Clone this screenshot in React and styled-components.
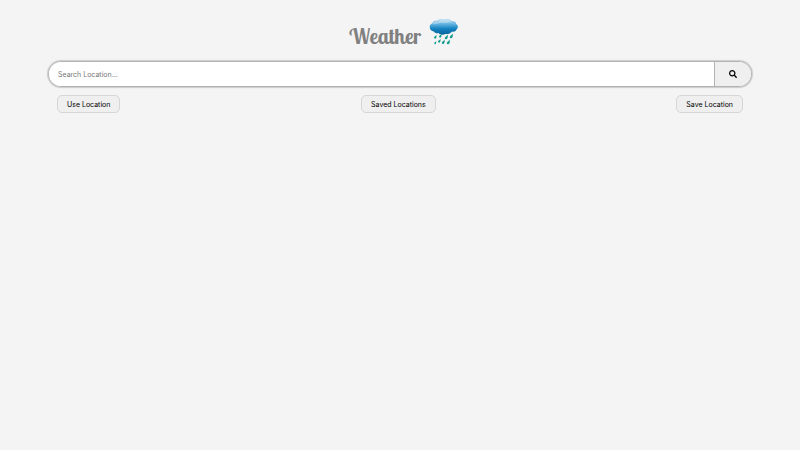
import React from "react";
import styled, { createGlobalStyle } from "styled-components";
import { FaSearch } from "react-icons/fa";

const GlobalStyle = createGlobalStyle`
  *, *::before, *::after { box-sizing: border-box; }
  body {
    margin: 0;
    background: #f4f4f4;
    font-family: Inter, "Liberation Sans", Arial, sans-serif;
  }
`;

const Page = styled.main`
  width: 88%;
  margin: 0 auto;
  padding-top: 16px;
`;

const Header = styled.header`
  display: flex;
  justify-content: center;
  align-items: flex-start;
  gap: 8px;
  height: 45px;
  padding-left: 8px;
`;

const Title = styled.h1`
  margin: 0;
  padding-top: 6px;
  color: #808080;
  font: bold 21px/28px "Lobster Two", "Liberation Serif", serif;
`;

const RainIcon = styled.svg`
  display: block;
  width: 30px;
  height: 30px;
`;

const SearchBar = styled.form`
  display: flex;
  height: 26px;
  border: 1px solid #b3b3b3;
  border-radius: 13px;
  background: #fff;
  box-shadow: 0 0 1px 1px #ccc;
  overflow: hidden;
`;

const SearchInput = styled.input`
  flex: 1;
  min-width: 0;
  padding: 0 9px;
  border: 0;
  outline: 0;
  background: #fff;
  color: #222;
  font: 7px Inter, "Liberation Sans", Arial, sans-serif;
  &::placeholder { color: #777; opacity: 1; }
`;

const SearchButton = styled.button`
  display: flex;
  align-items: center;
  justify-content: center;
  width: 37px;
  padding: 0;
  border: 0;
  border-left: 1px solid #b3b3b3;
  background: #efefef;
  color: #000;
  font-size: 8px;
  cursor: pointer;
`;

const Actions = styled.nav`
  display: flex;
  justify-content: space-between;
  padding: 8px 9px 0;
`;

const ActionButton = styled.button`
  height: 18px;
  padding: 0 9px;
  border: 1px solid #d6d6d6;
  border-radius: 5px;
  background: #efefef;
  color: #000;
  font: 7px Inter, "Liberation Sans", Arial, sans-serif;
  cursor: pointer;
`;

const drops = [
  [6, 20, 1], [11, 19, 1], [17, 20, 1.2], [22, 19, 1.2],
  [6, 26, 0.8], [10, 24, 1], [14, 25, 1.1], [19, 25, 1.2],
];

function RainCloud() {
  return (
    <RainIcon viewBox="0 0 30 30" aria-hidden="true">
      <defs>
        <linearGradient id="cloud" x1="0" y1="0" x2="0" y2="1">
          <stop offset="0" stopColor="#c4e2f1" />
          <stop offset="0.3" stopColor="#6cb8e2" />
          <stop offset="0.62" stopColor="#1583c2" />
          <stop offset="1" stopColor="#07649a" />
        </linearGradient>
      </defs>
      <path
        fill="url(#cloud)"
        d="M4.5 15.3C2.4 15 .8 13.5.9 11.7.2 9.7 1.3 7.8 3.4 7.2 4 5.2 6 4.3 8 4.7 9.7 2.8 12.4 2.5 14.5 3.4 17.4 2.2 21.1 2.8 22.8 5.2 25.4 4.7 27.3 6.2 27.2 8.1 29.3 9 29.6 11.8 27.8 13.1 27.3 15.2 25.1 16.1 23.1 15.5 21.4 17.5 18.5 18.6 16.5 17.9 14.2 19.2 11.1 18.8 9.8 17.2 7.8 17.6 5.7 17 4.5 15.3Z"
      />
      <path fill="#fff" opacity="0.3" d="M4 8C5 5.8 7 5.2 9 5.8 11 3.5 13 3.6 15 4.5 18 3.2 21 4 22.1 6.2 19 5.9 17 7.3 14 6.8 10 6.3 8 8.7 4 8Z" />
      {drops.map(([x, y, s]) => (
        <path
          key={`${x}-${y}`}
          transform={`translate(${x} ${y}) scale(${s})`}
          fill="#109b8e"
          d="M1.6-1.3C1.4.4 1.6 1.2 1.1 2.1.6 3.1-1 2.8-1 1.6-1 .6.7.1 1.6-1.3Z"
        />
      ))}
    </RainIcon>
  );
}

export default function App() {
  return (
    <>
      <GlobalStyle />
      <Page>
        <Header>
          <Title>Weather</Title>
          <RainCloud />
        </Header>
        <SearchBar role="search" onSubmit={(event) => event.preventDefault()}>
          <SearchInput type="text" aria-label="Search Location" placeholder="Search Location..." />
          <SearchButton type="submit" aria-label="Search"><FaSearch /></SearchButton>
        </SearchBar>
        <Actions aria-label="Locations">
          <ActionButton type="button">Use Location</ActionButton>
          <ActionButton type="button">Saved Locations</ActionButton>
          <ActionButton type="button">Save Location</ActionButton>
        </Actions>
      </Page>
    </>
  );
}
